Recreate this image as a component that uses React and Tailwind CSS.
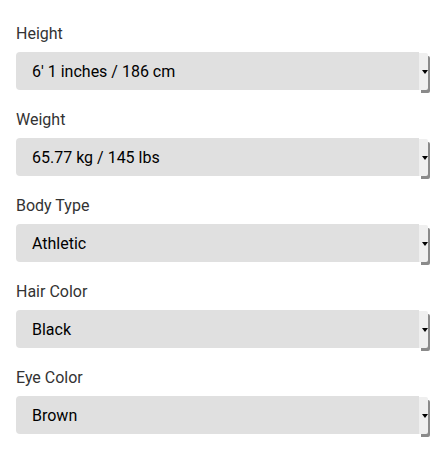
export default function App() {
  const fields = [
    ["Height", "6' 1 inches / 186 cm"],
    ["Weight", "65.77 kg / 145 lbs"],
    ["Body Type", "Athletic"],
    ["Hair Color", "Black"],
    ["Eye Color", "Brown"],
  ];
  return (
    <div className="w-[442px] h-[452px] bg-white px-4 pt-[23px]" style={{ fontFamily: "Roboto, sans-serif" }}>
      <div className="flex flex-col gap-[19px]">
        {fields.map(([label, value]) => (
          <div key={label} className="flex flex-col">
            <div className="text-[16px] leading-[22px] text-[#333]">{label}</div>
            <div className="mt-[7px] flex h-[38px] w-[412px] items-stretch">
              <div className="flex flex-1 items-center rounded-l-[4px] bg-[#e0e0e0] pl-4 pt-[1px] text-[16px] text-black">
                {value}
              </div>
              <div className="relative mt-[1px] flex w-[9px] items-center justify-center bg-[#efefef] shadow-[2px_3px_0_#8a8a8a] rounded-r-[2px]">
                <svg width="6" height="4" viewBox="0 0 6 4" className="ml-[2px]">
                  <path d="M0 0H6L3 4Z" fill="#000" />
                </svg>
              </div>
            </div>
          </div>
        ))}
      </div>
    </div>
  );
}
